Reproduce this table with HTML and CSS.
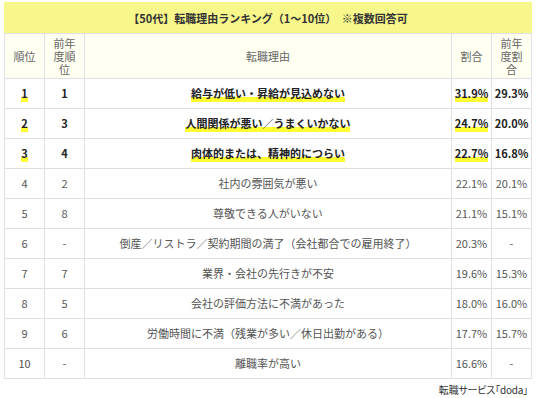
FILE: index.html
```html
<!DOCTYPE html>
<html lang="ja">
<head>
<meta charset="utf-8">
<link rel="stylesheet" href="styles.css">
</head>
<body>
<div class="wrap">
<table class="rank">
<colgroup><col class="c1"><col class="c2"><col class="c3"><col class="c4"><col class="c5"></colgroup>
<thead>
<tr><th class="title" colspan="5">【50代】転職理由ランキング（1〜10位）　※複数回答可</th></tr>
<tr class="head"><th>順位</th><th>前年度順位</th><th>転職理由</th><th>割合</th><th>前年度割合</th></tr>
</thead>
<tbody>
<tr class="top"><td><span class="mk">1</span></td><td>1</td><td><span class="mk">給与が低い・昇給が見込めない</span></td><td><span class="mk">31.9%</span></td><td>29.3%</td></tr>
<tr class="top"><td><span class="mk">2</span></td><td>3</td><td><span class="mk">人間関係が悪い／うまくいかない</span></td><td><span class="mk">24.7%</span></td><td>20.0%</td></tr>
<tr class="top"><td><span class="mk">3</span></td><td>4</td><td><span class="mk">肉体的または、精神的につらい</span></td><td><span class="mk">22.7%</span></td><td>16.8%</td></tr>
<tr><td>4</td><td>2</td><td>社内の雰囲気が悪い</td><td>22.1%</td><td>20.1%</td></tr>
<tr><td>5</td><td>8</td><td>尊敬できる人がいない</td><td>21.1%</td><td>15.1%</td></tr>
<tr><td>6</td><td>-</td><td>倒産／リストラ／契約期間の満了（会社都合での雇用終了）</td><td>20.3%</td><td>-</td></tr>
<tr><td>7</td><td>7</td><td>業界・会社の先行きが不安</td><td>19.6%</td><td>15.3%</td></tr>
<tr><td>8</td><td>5</td><td>会社の評価方法に不満があった</td><td>18.0%</td><td>16.0%</td></tr>
<tr><td>9</td><td>6</td><td>労働時間に不満（残業が多い／休日出勤がある）</td><td>17.7%</td><td>15.7%</td></tr>
<tr><td>10</td><td>-</td><td>離職率が高い</td><td>16.6%</td><td>-</td></tr>
</tbody>
</table>
<p class="source">転職サービス「doda」</p>
</div>
</body>
</html>
```
FILE: styles.css
```css
html, body {
  margin: 0;
  padding: 0;
  background: #fff;
}
body {
  font-family: "Noto Sans CJK JP", "Noto Sans", sans-serif;
  font-size: 11px;
  color: #555;
}
.wrap {
  padding: 2px 4px 0 4px;
}
.rank {
  width: 528px;
  border-collapse: collapse;
  table-layout: fixed;
}
.c1, .c2, .c4, .c5 { width: 40px; }
.rank th, .rank td {
  border: 1px solid #e0e0e0;
  text-align: center;
  vertical-align: middle;
  padding: 0 4px;
  line-height: 13px;
}
.rank td {
  height: 29px;
  padding: 0 2px;
}
.rank th.title {
  background: #f7f78c;
  border-color: #f7f78c;
  border-bottom-color: #e0e0e0;
  color: #333;
  font-weight: bold;
  height: 30px;
}
.head th {
  background: #fffff2;
  font-weight: normal;
  color: #666;
  height: 42px;
  padding: 1px 6px;
}
.top td {
  font-weight: bold;
  color: #222;
}
.mk {
  background: linear-gradient(transparent 72%, #ffff33 72%);
  padding-bottom: 1px;
}
.source {
  margin: 4px 4px 0 0;
  text-align: right;
  color: #333;
  font-size: 10px;
  line-height: 13px;
  font-feature-settings: "palt";
  letter-spacing: -0.2px;
}
```
